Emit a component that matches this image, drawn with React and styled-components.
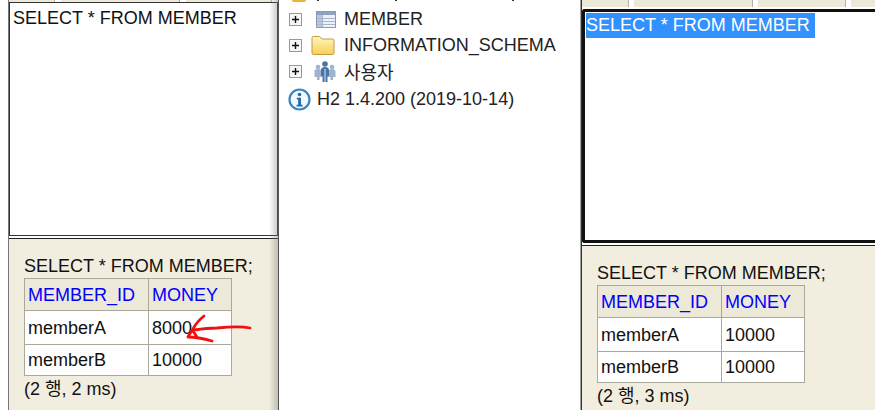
import React from 'react';
import styled, { createGlobalStyle } from 'styled-components';

const GlobalStyle = createGlobalStyle`
  html, body {
    margin: 0;
    padding: 0;
    background: #fff;
  }
  body {
    font-family: "Liberation Sans", Arial, "Noto Sans CJK KR", sans-serif;
    font-size: 18px;
    color: #111;
  }
`;

const Page = styled.div`
  display: flex;
  width: 875px;
  height: 410px;
  overflow: hidden;
`;

const QueryPane = styled.div`
  position: relative;
  display: flex;
  flex: none;
  width: ${(p) => p.$width}px;
  height: 100%;
  box-sizing: border-box;
  padding-left: ${(p) => p.$gutter}px;
  border-right: ${(p) => (p.$last ? 'none' : '1px solid #555')};
  border-left: ${(p) => (p.$last ? '1px solid #a0a0a0' : 'none')};
`;

const PaneBody = styled.div`
  display: flex;
  flex-direction: column;
  flex: 1;
  min-width: 0;
  border-left: 1px solid ${(p) => p.$line};
`;

const Shade = styled.div`
  position: absolute;
  top: 0;
  right: 0;
  bottom: 0;
  width: 9px;
  background: linear-gradient(to right, rgba(120, 120, 120, 0), rgba(120, 120, 120, 0.4));
  pointer-events: none;
`;

const TabStrip = styled.div`
  display: flex;
  flex: none;
  gap: ${(p) => p.$gap}px;
  height: ${(p) => p.$height}px;
  box-sizing: border-box;
  padding-bottom: ${(p) => p.$under}px;
  background: #fff;
  overflow: hidden;
`;

const Tab = styled.div`
  flex: none;
  width: ${(p) => p.$width}px;
  box-sizing: border-box;
  background: #ece9d8;
  border-right: 1px solid #b5b2a4;
`;

const Editor = styled.div`
  flex: none;
  height: ${(p) => p.$height}px;
  box-sizing: border-box;
  padding: ${(p) => (p.$focused ? '1px 1px' : '5px 3px')};
  background: #fff;
  border: ${(p) => (p.$focused ? '3px solid #111' : '1px solid #333')};
  border-right: ${(p) => (p.$focused ? 'none' : '1px solid #333')};
  border-radius: ${(p) => (p.$focused ? '3px 0 0 3px' : '0')};
  line-height: 21px;
  white-space: nowrap;
`;

const Selected = styled.span`
  display: inline-block;
  height: 25px;
  line-height: 25px;
  padding-right: 5px;
  background: #3390ff;
  color: #fff;
`;

const Results = styled.div`
  flex: 1;
  box-sizing: border-box;
  padding: 16px 0 0 15px;
  margin-top: 2px;
  background: #f1eee0;
  border-top: 1px solid #222;
  line-height: 20px;
`;

const Statement = styled.div`
  height: 23px;
  padding-top: 1px;
  box-sizing: border-box;
`;

const ResultTable = styled.table`
  border-collapse: collapse;
  table-layout: fixed;
  width: 207px;
  background: #fff;
`;

const HeadCell = styled.th`
  width: ${(p) => p.$width}px;
  height: 32px;
  padding: 0 0 0 3px;
  box-sizing: border-box;
  border: 1px solid #aca899;
  background: #ece9d8;
  color: #00f;
  font-weight: normal;
  text-align: left;
`;

const Cell = styled.td`
  height: ${(p) => p.$height}px;
  padding: 0 0 0 3px;
  box-sizing: border-box;
  border: 1px solid #aca899;
`;

const Footer = styled.div`
  margin-top: 3px;
`;

const Arrow = styled.svg`
  position: absolute;
  left: 180px;
  top: 310px;
`;

const TreePane = styled.div`
  flex: none;
  width: 301px;
  height: 100%;
  box-sizing: border-box;
  padding: 0 0 0 10px;
  background: #fff;
`;

const CutRow = styled.div`
  display: flex;
  height: 2px;
  margin-bottom: 4px;
  overflow: hidden;
`;

const CutFolder = styled.span`
  flex: none;
  width: 14px;
  height: 2px;
  margin: 0 0 0 3px;
  border-radius: 0 0 6px 6px;
  background: #eeb13c;
`;

const CutTick = styled.span`
  flex: none;
  width: 2px;
  height: 1px;
  margin-left: ${(p) => p.$gap}px;
  background: #333;
`;

const TreeRow = styled.div`
  display: flex;
  align-items: center;
  height: 26px;
  margin-top: ${(p) => p.$push || 0}px;
  white-space: nowrap;
  color: #222;
`;

const Toggle = styled.span`
  display: flex;
  align-items: center;
  justify-content: center;
  flex: none;
  width: 13px;
  height: 13px;
  box-sizing: border-box;
  border: 1px solid #999;
  background: #f6f6f6;
`;

const RowIcon = styled.svg`
  flex: none;
  margin: 0 ${(p) => p.$after}px 0 ${(p) => p.$gap}px;
`;

const RootIcon = styled.svg`
  flex: none;
  margin: 0 6px 0 -1px;
`;

const Plus = () => (
  <Toggle>
    <svg width="9" height="9" viewBox="0 0 9 9">
      <path d="M1 4.5h7M4.5 1v7" stroke="#111" strokeWidth="1.4" />
    </svg>
  </Toggle>
);

const TableIcon = () => (
  <RowIcon $gap={14} $after={8} width="20" height="17" viewBox="0 0 20 17">
    <rect x="0.5" y="0.5" width="19" height="16" fill="#eef1f6" stroke="#8b9ab8" />
    <rect x="1" y="1" width="18" height="3" fill="#8fa2c2" />
    <rect x="1" y="4" width="5" height="12" fill="#bcc8dc" />
    <path d="M1 7.5h18M1 10.5h18M1 13.5h18M6.5 4v12" stroke="#a8b6cd" />
  </RowIcon>
);

const FolderIcon = () => (
  <RowIcon $gap={9} $after={9} width="24" height="20" viewBox="0 0 24 20">
    <defs>
      <linearGradient id="folderFill" x1="0" y1="0" x2="0" y2="1">
        <stop offset="0" stopColor="#fff6c0" />
        <stop offset="1" stopColor="#f7cf55" />
      </linearGradient>
    </defs>
    <path d="M1 18V3q0-1.500 1.500-1.500h6L11 4h10.500Q23 4 23 5.500V18q0 1.500-1.500 1.500h-19Q1 19.500 1 18z" fill="url(#folderFill)" stroke="#c49a45" />
  </RowIcon>
);

const UsersIcon = () => (
  <RowIcon $gap={12} $after={8} width="22" height="22" viewBox="0 0 22 22">
    <g fill="#9db3d0">
      <circle cx="4" cy="7" r="2.300" />
      <circle cx="18" cy="7" r="2.300" />
      <path d="M0.500 11q0-2 3.500-2t3 2v6H5.500v3H3v-3H0.500zM15 11q0-2 3-2t3.500 2v6H19v3h-2.500v-3H15z" />
    </g>
    <circle cx="11" cy="4" r="2.800" fill="#4a74a6" />
    <path d="M7 10q0-3 4-3t4 3v6.500h-1.500V22h-5v-5.500H7z" fill="#4a74a6" />
    <path d="M11 9v13" stroke="#dfe7f1" />
  </RowIcon>
);

const InfoIcon = () => (
  <RootIcon width="23" height="23" viewBox="0 0 23 23">
    <circle cx="11.500" cy="11.500" r="10" fill="#f3f8fc" stroke="#3a85c0" strokeWidth="2.200" />
    <circle cx="11.500" cy="6.500" r="1.800" fill="#1f6aa8" />
    <path d="M8.800 9.800h4.200v7h1.600v1.600H8.600v-1.600h1.600v-5.400H8.800z" fill="#1f6aa8" />
  </RootIcon>
);

const ResultBlock = ({ money, elapsed }) => (
  <Results>
    <Statement>SELECT * FROM MEMBER;</Statement>
    <ResultTable>
      <thead>
        <tr>
          <HeadCell $width={124}>MEMBER_ID</HeadCell>
          <HeadCell $width={83}>MONEY</HeadCell>
        </tr>
      </thead>
      <tbody>
        <tr>
          <Cell $height={34}>memberA</Cell>
          <Cell $height={34}>{money}</Cell>
        </tr>
        <tr>
          <Cell $height={31}>memberB</Cell>
          <Cell $height={31}>10000</Cell>
        </tr>
      </tbody>
    </ResultTable>
    <Footer>(2 행, {elapsed} ms)</Footer>
  </Results>
);

const App = () => (
  <Page>
    <GlobalStyle />
    <QueryPane $width={279} $gutter={8}>
      <PaneBody $line="#777">
        <TabStrip $height={2} $gap={6} $under={0}>
          <Tab $width={46} />
          <Tab $width={119} />
          <Tab $width={86} />
        </TabStrip>
        <Editor $height={234}>SELECT * FROM MEMBER</Editor>
        <ResultBlock money="8000" elapsed="2" />
      </PaneBody>
      <Shade />
      <Arrow width="74" height="36" viewBox="0 0 74 36" fill="none">
        <path
          d="M24 6C19 10 15 15 13 19C11 22 9 25 8 27C16 27 25 29 32 31M14 20C21 19 30 18 37 18C48 17 60 16 70 18M13 21L17 27"
          stroke="#f01010"
          strokeWidth="2.800"
          strokeLinecap="round"
          strokeLinejoin="round"
        />
      </Arrow>
    </QueryPane>
    <TreePane>
      <CutRow>
        <CutFolder />
        <CutTick $gap={11} />
        <CutTick $gap={76} />
        <CutTick $gap={115} />
      </CutRow>
      <TreeRow>
        <Plus />
        <TableIcon />
        MEMBER
      </TreeRow>
      <TreeRow>
        <Plus />
        <FolderIcon />
        INFORMATION_SCHEMA
      </TreeRow>
      <TreeRow>
        <Plus />
        <UsersIcon />
        사용자
      </TreeRow>
      <TreeRow $push={2}>
        <InfoIcon />
        H2 1.4.200 (2019-10-14)
      </TreeRow>
    </TreePane>
    <QueryPane $width={295} $gutter={0} $last>
      <PaneBody $line="#333">
        <TabStrip $height={9} $gap={5} $under={2}>
          <Tab $width={47} />
          <Tab $width={119} />
          <Tab $width={88} />
          <Tab $width={30} />
        </TabStrip>
        <Editor $height={234} $focused>
          <Selected>SELECT * FROM MEMBER</Selected>
        </Editor>
        <ResultBlock money="10000" elapsed="3" />
      </PaneBody>
    </QueryPane>
  </Page>
);

export default App;
